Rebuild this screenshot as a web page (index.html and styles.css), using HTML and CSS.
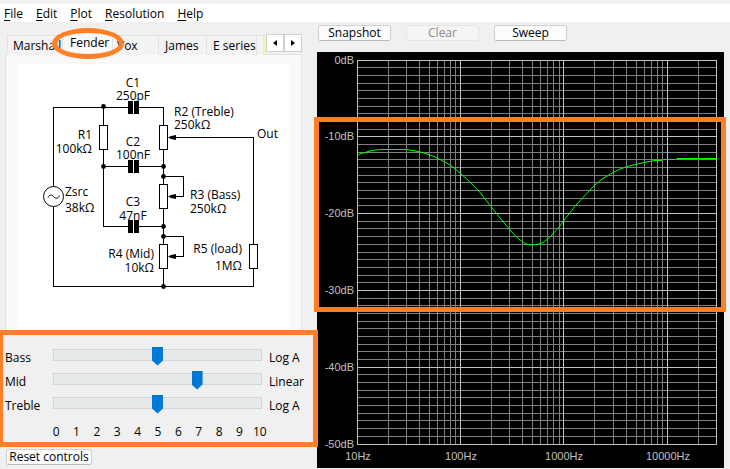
FILE: index.html
```html
<!DOCTYPE html>
<html lang="en">
<head>
<meta charset="utf-8">
<title>Tone Stack Calculator</title>
<link rel="stylesheet" href="styles.css">
</head>
<body>
<nav class="menu" aria-label="Main menu">
  <button type="button"><u>F</u>ile</button>
  <button type="button"><u>E</u>dit</button>
  <button type="button"><u>P</u>lot</button>
  <button type="button"><u>R</u>esolution</button>
  <button type="button"><u>H</u>elp</button>
</nav>
<main class="workspace">
  <section class="side">
    <div class="tabbar">
      <div class="tabs" role="tablist">
        <button type="button" role="tab" class="tab">Marshall</button>
        <button type="button" role="tab" class="tab selected" aria-selected="true">Fender</button>
        <button type="button" role="tab" class="tab">Vox</button>
        <button type="button" role="tab" class="tab">James</button>
        <button type="button" role="tab" class="tab">E series</button>
        <button type="button" role="tab" class="tab next" aria-label="Next model"></button>
      </div>
      <div class="scroller">
        <button type="button" aria-label="Scroll tabs left"><svg width="4" height="6"><path d="M4 0v6L0 3z"/></svg></button>
        <button type="button" aria-label="Scroll tabs right"><svg width="4" height="6"><path d="M0 0v6L4 3z"/></svg></button>
      </div>
      <div class="ring"></div>
    </div>
    <div class="panel">
      <svg class="circuit" viewBox="17 64 272 266" role="img" aria-label="Fender tone stack circuit">
        <g class="wire">
          <path d="M53.5 186.5V107.5H128M139 107.5H163.5V125M103.5 107.5V125M103.5 150V226.5H128M139 226.5H163.5M103.5 166.5H128M139 166.5H163.5"/>
          <path d="M163.5 150V184M163.5 209V244M163.5 269V286.5M53.5 206.5V286.5H253.5V269M253.5 244V137.5H170"/>
          <path d="M163.5 176.5H183.5V196.5H170M163.5 236.5H183.5V256.5H170"/>
          <path d="M99.5 125.5h8v24h-8zM159.5 125.5h8v24h-8zM159.5 184.5h8v24h-8zM159.5 244.5h8v24h-8zM249.5 244.5h8v24h-8z"/>
        </g>
        <g class="source">
          <circle cx="53.5" cy="196.5" r="10"/>
          <path d="M48 197.500C49 194.500 52 194.500 53.500 196.500S58 199.500 59.500 195.500"/>
        </g>
        <path d="M128 101h5v13h-5zM134 101h5v13h-5zM128 160h5v13h-5zM134 160h5v13h-5zM128 220h5v13h-5zM134 220h5v13h-5z"/>
        <path d="M168 137.500l3-1.500 5-1v5l-5-1zM168 196.500l3-1.500 5-1v5l-5-1zM168 256.500l3-1.500 5-1v5l-5-1z"/>
        <g>
          <circle cx="103.500" cy="106.500" r="2.400"/><circle cx="103.500" cy="166.500" r="2.400"/>
          <circle cx="163.500" cy="166.500" r="2.400"/><circle cx="163.500" cy="176.500" r="2.400"/>
          <circle cx="163.500" cy="226.500" r="2.400"/><circle cx="163.500" cy="236.500" r="2.400"/>
          <circle cx="163.500" cy="286.500" r="2.400"/>
        </g>
        <g text-anchor="middle">
          <text x="133" y="87">C1</text><text x="133" y="100">250pF</text>
          <text x="133" y="146">C2</text><text x="133" y="159">100nF</text>
          <text x="133" y="206">C3</text><text x="133" y="220">47nF</text>
        </g>
        <g text-anchor="end">
          <text x="92" y="139">R1</text><text x="92" y="153">100kΩ</text>
          <text x="154" y="258">R4 (Mid)</text><text x="154" y="272">10kΩ</text>
          <text x="242" y="253">R5 (load)</text><text x="242" y="270">1MΩ</text>
        </g>
        <g>
          <text x="65" y="196">Zsrc</text><text x="65" y="212">38kΩ</text>
          <text x="174" y="116">R2 (Treble)</text><text x="174" y="129">250kΩ</text>
          <text x="190" y="199">R3 (Bass)</text><text x="190" y="213">250kΩ</text>
          <text x="257" y="138">Out</text>
        </g>
      </svg>
    </div>
    <div class="controls">
      <div class="control">
        <label for="bass">Bass</label>
        <input type="range" id="bass" min="0" max="10" value="5">
        <span>Log A</span>
      </div>
      <div class="control">
        <label for="mid">Mid</label>
        <input type="range" id="mid" min="0" max="10" value="7">
        <span>Linear</span>
      </div>
      <div class="control">
        <label for="treble">Treble</label>
        <input type="range" id="treble" min="0" max="10" value="5">
        <span>Log A</span>
      </div>
      <div class="scale">
        <span>0</span><span>1</span><span>2</span><span>3</span><span>4</span><span>5</span><span>6</span><span>7</span><span>8</span><span>9</span><span>10</span>
      </div>
    </div>
    <button type="button" class="button reset">Reset controls</button>
  </section>
  <section class="response">
    <div class="actions">
      <button type="button" class="button">Snapshot</button>
      <button type="button" class="button" disabled>Clear</button>
      <button type="button" class="button">Sweep</button>
    </div>
    <svg class="plot" viewBox="317 52 407 416" role="img" aria-label="Frequency response">
      <rect x="317" y="52" width="407" height="416"/>
      <path id="minor" class="minor"/>
      <path id="major" class="major"/>
      <polyline class="curve" points="357,155.500 361,153.500 365,152.500 370,151 375,150 382,149.500 406,149.500 413,150.500 420,152 426,153.500 435,157 444,161.500 453,167 461,174 470,182 480,192.500 491,206.500 500,218 510,230 516,236.500 520,240 525,243.500 530,245 537,244.500 543,242.500 547,239.500 551,236 560,226 563,221.500 576,205 590,190 596,184 602,179 607,176 613,172.500 620,169 627,166.500 633,165 640,163.500 646,162 655,160.500 662,160.500 663,159.500 676,159.500 677,158.500 717,158.500"/>
      <g text-anchor="end">
        <text x="354" y="64">0dB</text><text x="354" y="140">-10dB</text>
        <text x="354" y="217">-20dB</text><text x="354" y="294">-30dB</text>
        <text x="354" y="371">-40dB</text><text x="354" y="448">-50dB</text>
      </g>
      <g text-anchor="middle">
        <text x="358" y="460">10Hz</text><text x="461" y="460">100Hz</text>
        <text x="564" y="460">1000Hz</text><text x="668" y="460">10000Hz</text>
      </g>
      <rect class="marker" x="316.500" y="119.500" width="407" height="190"/>
    </svg>
  </section>
</main>
<script src="grid.js"></script>
</body>
</html>
```
FILE: styles.css
```css
* { box-sizing: border-box; }
body {
  margin: 0;
  background: #f0f0f0;
  color: #000;
  font: 12px/16px "Open Sans", "Noto Sans", sans-serif;
}
button { font: inherit; color: inherit; margin: 0; padding: 0; border: 0; background: none; }
svg { display: block; }

.menu {
  display: flex;
  gap: 13px;
  padding: 1px 4px 0;
  background: #fff;
  border-top: 4px solid #f2f2f2;
  height: 22px;
}
.menu u { text-underline-offset: 2px; }

.workspace { display: grid; grid-template-columns: 317px minmax(0, 1fr); }

.tabbar {
  position: relative;
  display: flex;
  padding: 10px 15px 0 7px;
  height: 32px;
}
.tabs {
  flex: 1;
  display: grid;
  grid-template-columns: 57px 47px 48px 48px 50px 1fr;
  align-items: end;
}
.tab {
  height: 20px;
  margin-top: 2px;
  padding: 0 0 0 6px;
  text-align: left;
  white-space: nowrap;
  border: 1px solid #e3e3e3;
  border-width: 1px 1px 0 0;
  background: #f3f3f3;
}
.tab:first-child { border-left-width: 1px; padding-left: 5px; }
.tab.selected {
  height: 24px;
  margin: 0 -2px -1px;
  padding: 0 0 4px 7px;
  background: #f9f9f9;
  border-left-width: 1px;
  z-index: 1;
}
.tab.next { border-right: 2px solid #f5f0a8; margin-right: 1px; }
.scroller { display: flex; height: 18px; margin-top: 2px; }
.scroller button {
  width: 18px;
  display: flex;
  align-items: center;
  justify-content: center;
  background: #fff;
  border: 1px solid #d0d0d0;
}
.ring {
  position: absolute;
  left: 52px;
  top: 6px;
  width: 72px;
  height: 31px;
  border: 5px solid #ff7f27;
  border-radius: 50%;
  z-index: 2;
  pointer-events: none;
}

.panel {
  margin: 0 15px 0 5px;
  padding: 9px 12px 0 11px;
  background: #f9f9f9;
  border: 1px solid #e3e3e3;
  border-bottom: 0;
}
.circuit { width: 100%; background: #fff; }
.wire, .source { fill: none; stroke: #000; }
.wire { shape-rendering: crispEdges; }

.controls {
  margin: 0 -1px 0 -2px;
  padding: 10px 0 0 2px;
  border: 5px solid #ff7f27;
  position: relative;
}
.control {
  display: grid;
  grid-template-columns: 48px minmax(0, 1fr) 51px;
  align-items: start;
  height: 24px;
  line-height: 26px;
}
.control span { padding-left: 7px; }
input[type="range"] {
  appearance: none;
  -webkit-appearance: none;
  width: 100%;
  height: 19px;
  margin: 0;
  background: none;
}
input[type="range"]::-webkit-slider-runnable-track {
  height: 12px;
  background: #e7eaea;
  border: solid #d6d6d6;
  border-width: 1px 0;
  box-shadow: inset 1px 0 #d6d6d6, inset -1px 0 #d6d6d6;
}
input[type="range"]::-webkit-slider-thumb {
  -webkit-appearance: none;
  width: 11px;
  height: 19px;
  margin-top: -3px;
  background: #0078d7;
  clip-path: polygon(0 0, 100% 0, 100% 74%, 50% 100%, 0 74%);
}
.scale {
  display: grid;
  grid-template-columns: repeat(11, 1fr);
  padding: 5px 43px 0 41px;
  text-align: center;
  line-height: 20px;
}

.button {
  width: 73px;
  height: 16px;
  line-height: 14px;
  background: #fdfdfd;
  border: 1px solid #d0d0d0;
  border-bottom-color: #bababa;
  border-radius: 3px;
}
.button:disabled { color: #8c8c8c; background: #f5f5f5; border-color: #e6e6e6; }
.reset { width: 86px; margin: 2px 6px; }

.response { padding: 3px 6px 0 0; }
.actions { display: flex; gap: 15px; padding: 0 1px; margin-bottom: 11px; }
.plot { width: 100%; overflow: visible; }
.plot text { font: 11px "Liberation Sans", Arial, sans-serif; fill: #c0c0c0; }
.minor, .major, .curve { fill: none; }
.minor, .major { shape-rendering: crispEdges; }
.minor { stroke: #808080; }
.major { stroke: #c0c0c0; }
.curve { stroke: #0f0; }
.marker { fill: none; stroke: #ff7f27; stroke-width: 5; }
```
FILE: grid.js
```js
// Logarithmic frequency axis (10 Hz to 30 kHz) against 0 to -50 dB.
const left = 357, right = 717, top0 = 60, bottom = 445;
const xAt = hz => Math.floor(left + 103.4 * Math.log10(hz / 10)) + 0.5;
const yAt = db => Math.floor(top0 + 7.68 * db) + 0.5;
let minor = "", major = "";
for (let decade = 10; decade <= 10000; decade *= 10) {
  for (let n = 1; n < 10 && n * decade <= 30000; n++) {
    const line = `M${xAt(n * decade)} ${top0}V${bottom}`;
    if (n === 1 || n * decade === 30000) major += line; else minor += line;
  }
}
for (let db = 0; db <= 50; db++) {
  const line = `M${left} ${yAt(db)}H${right}`;
  if (db % 10 === 0) major += line; else minor += line;
}
document.getElementById("minor").setAttribute("d", minor);
document.getElementById("major").setAttribute("d", major);
```
